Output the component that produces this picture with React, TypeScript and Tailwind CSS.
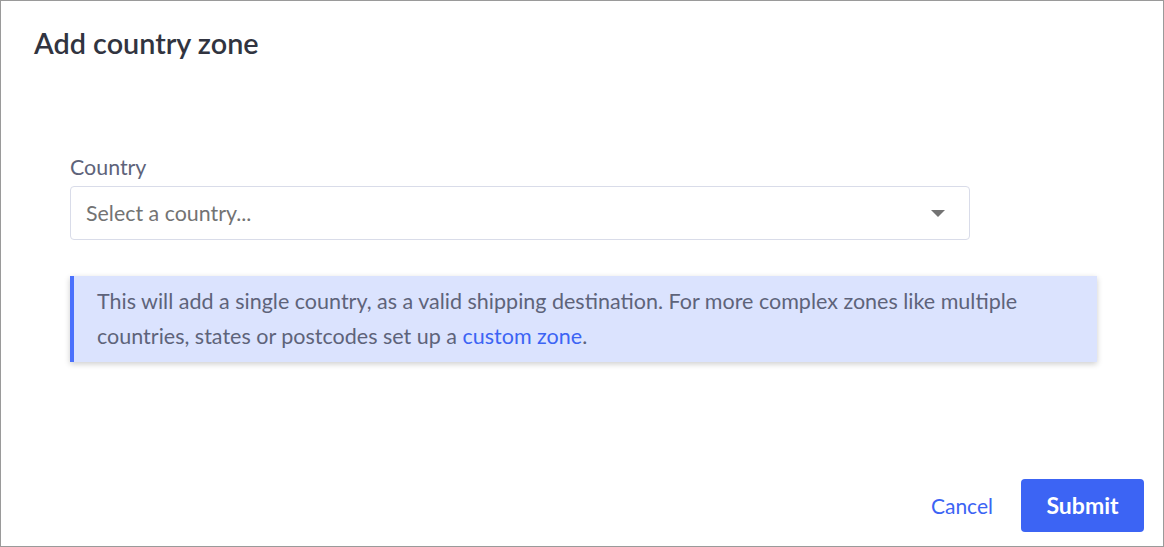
export default function App() {
  return (
    <div
      className="w-[1164px] h-[547px] bg-white border border-[#9a9a9a] flex flex-col"
      style={{ fontFamily: 'Lato, "Noto Sans", sans-serif' }}
    >
      {/* Header */}
      <div className="px-[33px] pt-[24px]">
        <h2 className="text-[28.8px] leading-[36px] font-semibold text-[#313440]">Add country zone</h2>
      </div>

      {/* Body */}
      <div className="px-[69px] pt-[94px] flex-1">
        <label className="block text-[21.4px] leading-[24px] text-[#5e637a] mb-[7px]">Country</label>
        <div className="w-[900px] h-[54px] border border-[#d9dce9] rounded-[4px] flex items-center justify-between pl-[15px] pr-[24px]">
          <span className="text-[21.4px] text-[#737373]">Select a country...</span>
          <svg width="14" height="7" viewBox="0 0 14 7">
            <path d="M0 0h14L7 7z" fill="#737373" />
          </svg>
        </div>

        <div className="mt-[36px] w-[1027px] bg-[#dbe3fe] border-l-[4px] border-[#4b71fc] shadow-[0_2px_6px_rgba(0,0,0,0.2)] pl-[23px] pr-[16px] py-[8px]">
          <p className="text-[21.5px] leading-[35px] text-[#5e637a]">
            This will add a single country, as a valid shipping destination. For more complex zones like multiple
            countries, states or postcodes set up a{' '}
            <a className="text-[#3c64f4]">custom zone</a>.
          </p>
        </div>
      </div>

      {/* Footer */}
      <div className="flex items-center justify-end gap-[28px] pr-[19px] pb-[14px]">
        <button className="text-[21px] text-[#3c64f4]">Cancel</button>
        <button className="w-[123px] h-[53px] rounded-[4px] bg-[#3c64f4] text-white text-[23px] font-bold">
          Submit
        </button>
      </div>
    </div>
  )
}
